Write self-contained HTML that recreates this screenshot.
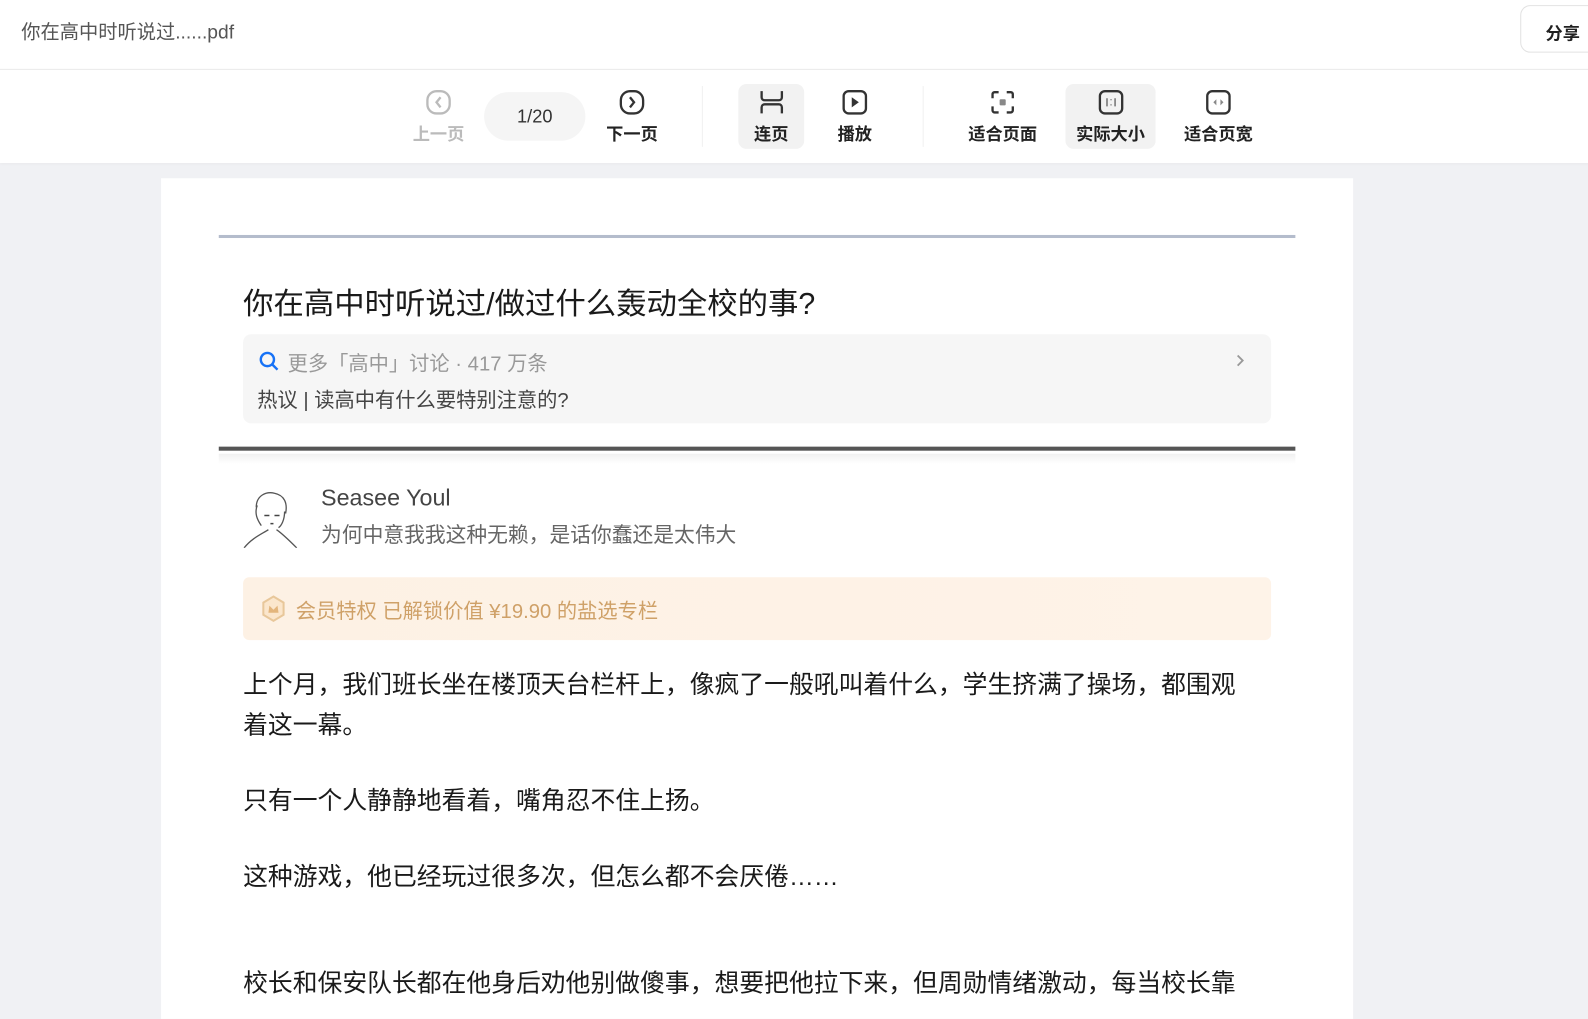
<!DOCTYPE html>
<html><head><meta charset="utf-8"><style>
*{margin:0;padding:0;box-sizing:border-box}
body{width:1588px;height:994px;overflow:hidden;background:#f0f1f4;font-family:"Liberation Sans","Noto Sans CJK SC",sans-serif;position:relative}
#w{position:absolute;left:0;top:0;width:1568px;height:982px;transform:scale(1.0128);transform-origin:0 0}
.hdr{position:absolute;left:0;top:0;width:1600px;height:69px;background:#fff;border-bottom:1px solid #e8e8e8}
.hdr .t{position:absolute;left:21px;top:17px;font-size:19px;color:#555}
.share{position:absolute;left:1501px;top:5px;width:110px;height:47px;border:1px solid #e2e2e2;border-radius:10px;font-size:17px;font-weight:bold;color:#222;padding:13px 0 0 24px}
.tb{position:absolute;left:0;top:69px;width:1600px;height:92px;background:#fff;box-shadow:0 1px 3px rgba(0,0,0,.05)}
.it{position:absolute;top:14px;height:64px;text-align:center;font-size:17px;font-weight:bold;color:#222}
.it svg{display:block;margin:4px auto 3px}
.it.sel{background:#f2f2f2;border-radius:8px}
.sep{position:absolute;top:16px;width:1px;height:60px;background:#f0f0f0}
.pg{position:absolute;left:478px;top:22px;width:100px;height:48px;border-radius:24px;background:#f5f5f5;font-size:18px;color:#333;text-align:center;line-height:48px}
.doc{position:absolute;left:159px;top:176px;width:1177px;height:830px;background:#fff}
.line1{position:absolute;left:57px;top:56px;width:1063px;height:3px;background:#b4bccc}
.title{position:absolute;left:81px;top:99px;font-size:30px;color:#1a1a1a}
.box{position:absolute;left:81px;top:154px;width:1015px;height:88px;background:#f6f6f6;border-radius:8px}
.box .a{position:absolute;left:44px;top:13px;font-size:20px;color:#999}
.box .b{position:absolute;left:14px;top:49px;font-size:20px;color:#444}
.line2{position:absolute;left:57px;top:265px;width:1063px;height:4px;background:#555}
.line3{position:absolute;left:57px;top:272px;width:1063px;height:10px;background:linear-gradient(#f0f0f0,#fff)}
.name{position:absolute;left:158px;top:302px;font-size:23px;color:#444}
.sig{position:absolute;left:158px;top:335px;font-size:20.5px;color:#666}
.vip{position:absolute;left:81px;top:394px;width:1015px;height:62px;background:linear-gradient(90deg,#fdf1e4,#fef3e8);border-radius:6px;font-size:20px;color:#cfa168}
.p{position:absolute;left:81px;font-size:24.5px;color:#1a1a1a;line-height:40px;width:995px}
</style></head><body><div id="w">
<div class="hdr"><div class="t">你在高中时听说过......pdf</div><div class="share">分享</div></div>
<div class="tb">
 <div class="it" style="left:402px;width:62px;color:#bbb"><svg width="28" height="28" viewBox="0 0 28 28"><rect x="3" y="3" width="22" height="22" rx="9" fill="none" stroke="#bbb" stroke-width="2.3"/><path d="M16 9l-4 5 4 5" fill="none" stroke="#bbb" stroke-width="2.3"/></svg>上一页</div>
 <div class="pg">1/20</div>
 <div class="it" style="left:593px;width:62px"><svg width="28" height="28" viewBox="0 0 28 28"><rect x="3" y="3" width="22" height="22" rx="9" fill="none" stroke="#333" stroke-width="2.3"/><path d="M12 9l4 5-4 5" fill="none" stroke="#333" stroke-width="2.3"/></svg>下一页</div>
 <div class="sep" style="left:693px"></div>
 <div class="it sel" style="left:729px;width:65px"><svg width="28" height="28" viewBox="0 0 28 28"><path d="M4 3v6a3 3 0 003 3h14a3 3 0 003-3V3M4 25v-6a3 3 0 013-3h14a3 3 0 013 3v6" fill="none" stroke="#333" stroke-width="2.3"/></svg>连页</div>
 <div class="it" style="left:815px;width:58px"><svg width="28" height="28" viewBox="0 0 28 28"><rect x="3" y="3" width="22" height="22" rx="5" fill="none" stroke="#333" stroke-width="2.3"/><path d="M11 9v10l7-5z" fill="#333"/></svg>播放</div>
 <div class="sep" style="left:911px"></div>
 <div class="it" style="left:950px;width:80px"><svg width="28" height="28" viewBox="0 0 28 28"><path d="M4 10V6a2 2 0 012-2h4M18 4h4a2 2 0 012 2v4M24 18v4a2 2 0 01-2 2h-4M10 24H6a2 2 0 01-2-2v-4" fill="none" stroke="#333" stroke-width="2.3"/><rect x="11" y="11" width="6" height="6" rx="1" fill="#888"/></svg>适合页面</div>
 <div class="it sel" style="left:1052px;width:89px"><svg width="28" height="28" viewBox="0 0 28 28"><rect x="3" y="3" width="22" height="22" rx="5" fill="none" stroke="#333" stroke-width="2.3"/><path d="M10 10v8M18 10v8M14 11v1M14 16v1" stroke="#888" stroke-width="1.8"/></svg>实际大小</div>
 <div class="it" style="left:1163px;width:80px"><svg width="28" height="28" viewBox="0 0 28 28"><rect x="3" y="3" width="22" height="22" rx="5" fill="none" stroke="#333" stroke-width="2.3"/><path d="M12 11l-3 3 3 3zM16 11l3 3-3 3z" fill="#888"/></svg>适合页宽</div>
</div>
<div class="doc">
 <div class="line1"></div>
 <div class="title">你在高中时听说过/做过什么轰动全校的事?</div>
 <div class="box">
  <svg style="position:absolute;left:15px;top:16px" width="22" height="22" viewBox="0 0 22 22"><circle cx="9" cy="9" r="6.5" fill="none" stroke="#1772f6" stroke-width="2.4"/><path d="M14 14l5 5" stroke="#1772f6" stroke-width="2.4"/></svg>
  <div class="a">更多「高中」讨论 · 417 万条</div>
  <div class="b">热议 | 读高中有什么要特别注意的?</div>
  <svg style="position:absolute;left:979px;top:19px" width="12" height="14" viewBox="0 0 12 14"><path d="M3 2l5 5-5 5" fill="none" stroke="#999" stroke-width="1.8"/></svg>
 </div>
 <div class="line2"></div><div class="line3"></div>
 <svg style="position:absolute;left:80px;top:305px" width="56" height="60" viewBox="0 0 56 60"><path d="M14 20c0-12 10-16 18-14 10 2 13 10 11 20M15 18c-3 8 0 14 4 20M42 24c0 8-3 14-6 16M26 42c-6 4-16 8-24 18M34 42c6 4 12 10 20 18" fill="none" stroke="#555" stroke-width="1.3"/><path d="M22 28h5M32 28h5M28 36h3" stroke="#444" stroke-width="1.5"/></svg>
 <div class="name">Seasee Youl</div>
 <div class="sig">为何中意我我这种无赖，是话你蠢还是太伟大</div>
 <div class="vip"><svg style="position:absolute;left:17px;top:17px" width="26" height="28" viewBox="0 0 26 28"><path d="M13 2l10 6v12l-10 6-10-6V8z" fill="#fbe6cc" stroke="#e8c79a" stroke-width="2"/><path d="M8 18l1-7 4 4 4-4 1 7z" fill="#e3b57c"/></svg><span style="position:absolute;left:52px;top:17px">会员特权 已解锁价值 ¥19.90 的盐选专栏</span></div>
 <div class="p" style="top:481px">上个月，我们班长坐在楼顶天台栏杆上，像疯了一般吼叫着什么，学生挤满了操场，都围观着这一幕。</div>
 <div class="p" style="top:596px">只有一个人静静地看着，嘴角忍不住上扬。</div>
 <div class="p" style="top:671px">这种游戏，他已经玩过很多次，但怎么都不会厌倦……</div>
 <div class="p" style="top:776px;white-space:nowrap;overflow:hidden;width:1030px">校长和保安队长都在他身后劝他别做傻事，想要把他拉下来，但周勋情绪激动，每当校长靠</div>
</div>
</div></body></html>
